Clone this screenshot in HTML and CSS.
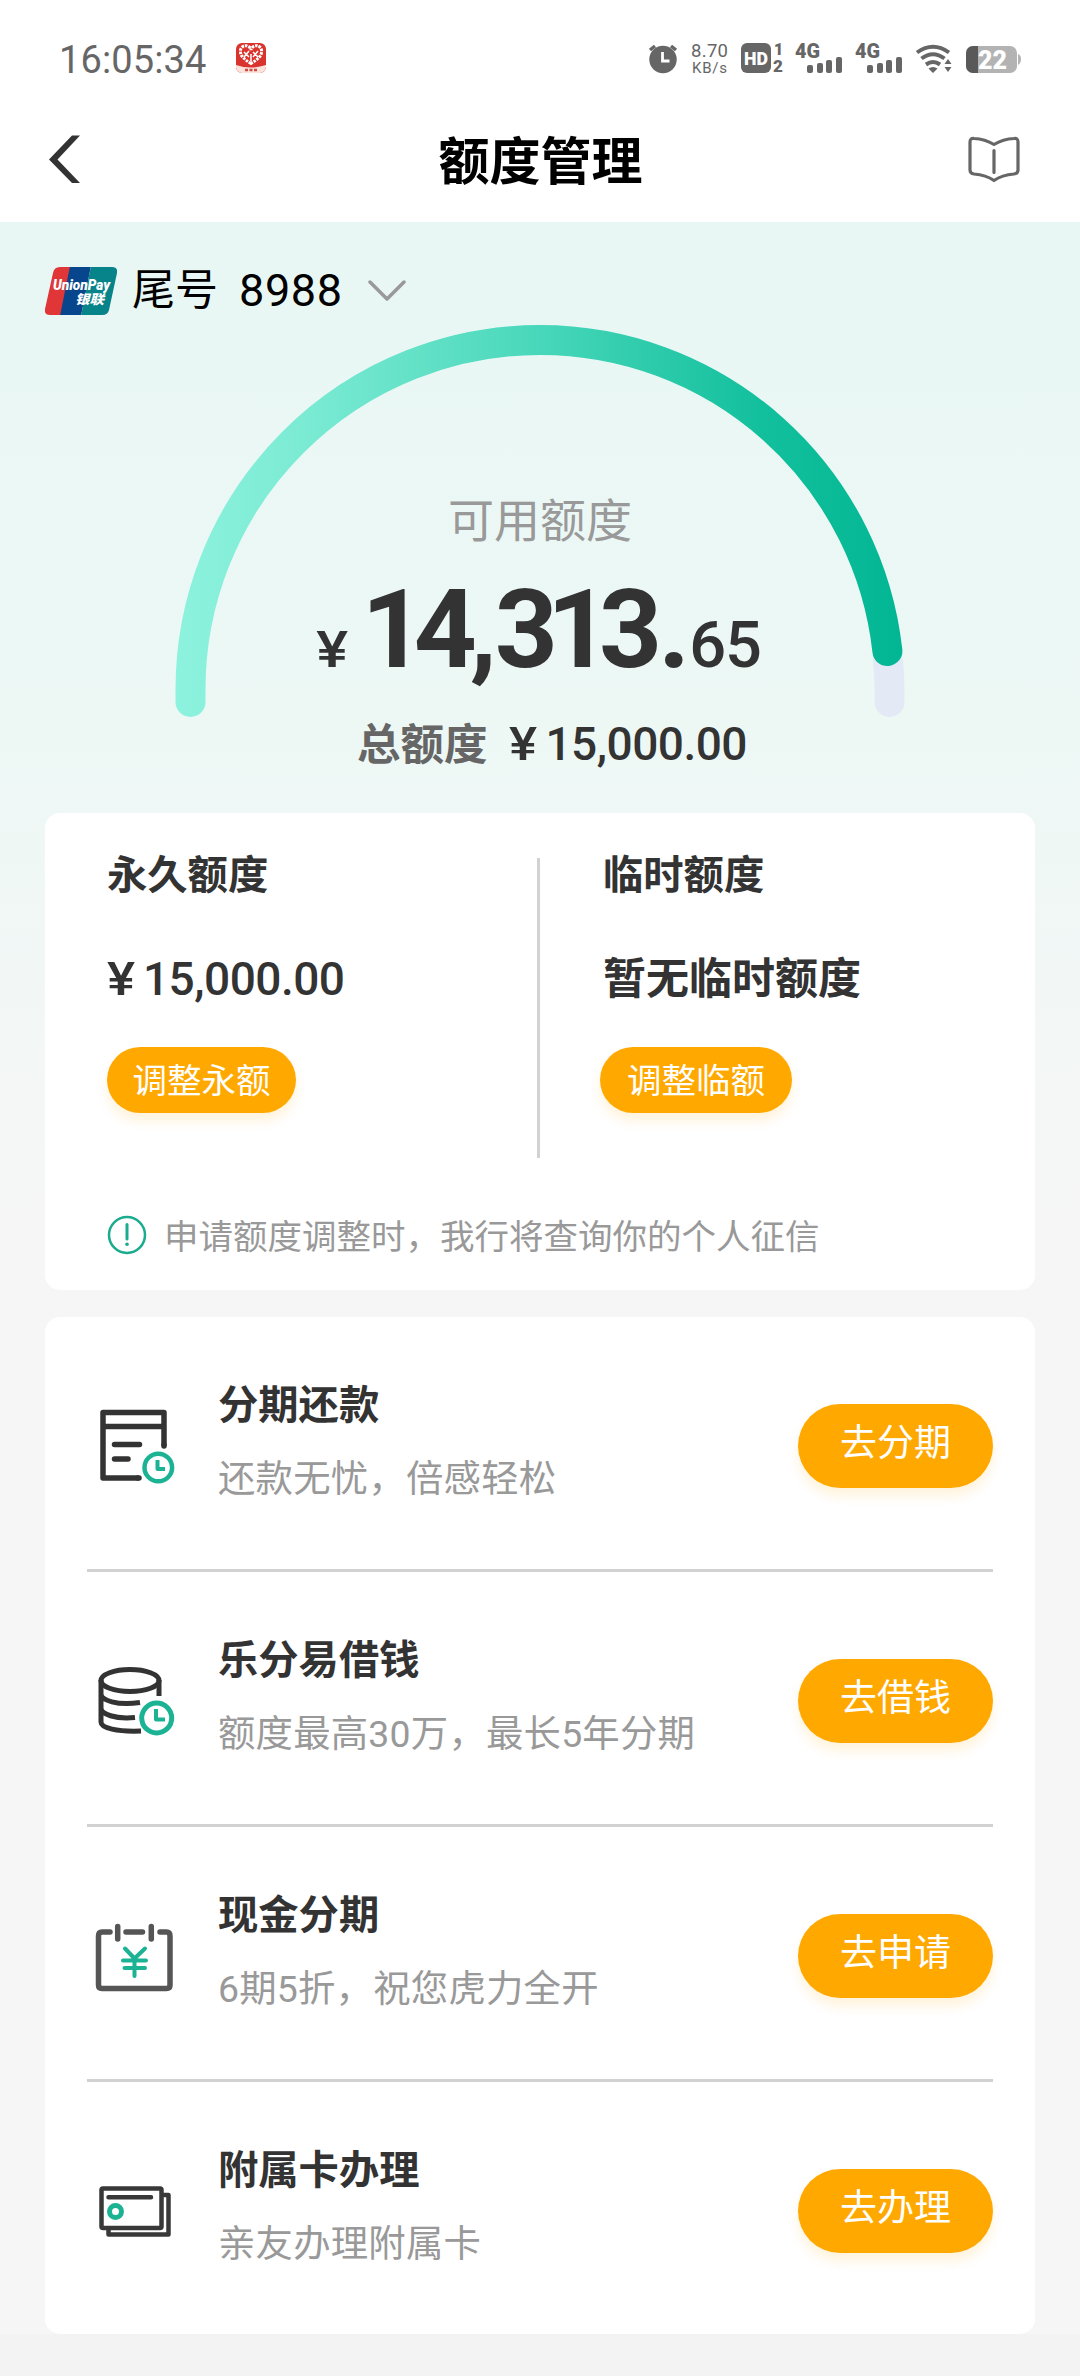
FILE: index.html
```html
<!DOCTYPE html>
<html lang="zh-CN">
<head>
<meta charset="utf-8">
<title>额度管理</title>
<link rel="stylesheet" href="styles.css">
</head>
<body>
<header class="top">
  <div class="status">
    <span class="clock">16:05:34</span>
    <svg class="app-icon" width="30" height="30" viewBox="0 0 30 30">
      <rect width="30" height="30" rx="6" fill="#d8332c"/>
      <path d="M0 22Q15 27 30 22V24a6 6 0 0 1-6 6H6a6 6 0 0 1-6-6Z" fill="#fbe3dc"/>
      <path d="M15 20.500C8 16 4.500 13 4.500 9A5 5 0 0 1 15 7a5 5 0 0 1 10.500 2C25.500 13 22 16 15 20.500Z" fill="none" stroke="#fff" stroke-width="3" stroke-dasharray="2.500 1"/>
      <path d="M8 9l5 5M13 8l-5 6M17 9l5 5M22 8l-5 6M15 11v7" stroke="#fff" stroke-width="1.500"/>
      <path d="M9 27h12" stroke="#cf4b43" stroke-width="2.500" stroke-dasharray="3 1.500"/>
    </svg>
    <svg class="indicators" width="376" height="36" viewBox="646 40 376 36" fill="#666">
      <circle cx="663" cy="59.500" r="13.700"/>
      <path d="M650 50l5-4M676 50l-5-4" stroke="#666" stroke-width="3.500"/>
      <path d="M662.500 52v9h7" fill="none" stroke="#fff" stroke-width="2.800"/>
      <text x="691" y="57" font-size="18.500" textLength="37">8.70</text>
      <text x="692" y="73" font-size="15" textLength="35">KB/s</text>
      <rect x="741" y="43" width="30" height="30" rx="6"/>
      <text x="744" y="64.500" class="heavy" font-size="18" textLength="24" lengthAdjust="spacingAndGlyphs" fill="#fff">HD</text>
      <text x="774" y="55" class="heavy" font-size="16">1</text>
      <text x="773" y="72" class="heavy" font-size="17">2</text>
      <text x="795" y="58" class="heavy" font-size="20" textLength="25" lengthAdjust="spacingAndGlyphs">4G</text>
      <text x="855" y="58" class="heavy" font-size="20" textLength="25" lengthAdjust="spacingAndGlyphs">4G</text>
      <g id="bars"><rect x="807" y="65" width="6" height="8" rx="2"/><rect x="817" y="63" width="6" height="10" rx="2"/><rect x="826" y="60" width="6" height="13" rx="2"/><rect x="836" y="57" width="6" height="16" rx="2"/></g>
      <use href="#bars" x="60"/>
      <g fill="none" stroke="#666" stroke-width="4"><path d="M917 52.500Q933 41 949 52.500M921.500 58.500Q933 50 944.500 58.500M926 64.500Q933 59.500 940 64.500"/></g>
      <path d="M928.500 68.500Q933 65.500 937.500 68.500L933 73ZM944.500 64l3.500-5 3.500 5ZM944.500 67l3.500 5 3.500-5Z"/>
      <rect x="966" y="46" width="51" height="27" rx="7" fill="#b3b3b3"/>
      <path d="M1018 54q3 1 3 5t-3 6Z" fill="#b3b3b3"/>
      <path d="M978 46h-5a7 7 0 0 0-7 7v13a7 7 0 0 0 7 7h5Z" fill="#595959"/>
      <text x="978" y="69" class="heavy" font-size="25" textLength="29" fill="#fff">22</text>
    </svg>
  </div>
  <nav class="nav">
    <svg width="34" height="52" viewBox="0 0 34 52"><path d="M32 2.500H24L1 26.500 24 50H32L9.500 26.500Z" fill="#333"/></svg>
    <h1>额度管理</h1>
    <svg width="52" height="48" viewBox="0 0 52 48" fill="none" stroke="#666" stroke-width="3.200" stroke-linejoin="round" stroke-linecap="round"><path d="M26 9.500Q17 4 6 3.500Q2 3 2 7V35Q2 38.500 6 39Q18 40 26 45.500Q34 40 46 39Q50 38.500 50 35V7Q50 3 46 3.500Q35 4 26 9.500ZM26 15.500V37.500"/></svg>
  </nav>
</header>
<main>
  <section class="card-select">
    <svg class="unionpay" width="72" height="50" viewBox="0 0 72 50">
      <defs><clipPath id="card"><path d="M15 1H67Q73 1 72 7L64 44Q63 49 57 49H5Q-1 49 0 43L8 7Q9 1 15 1Z"/></clipPath></defs>
      <g clip-path="url(#card)"><path d="M0 0H27L17 50H0Z" fill="#e03638"/><path d="M25 0H46L36 50H15Z" fill="#07468c"/><path d="M46 0H72V50H36Z" fill="#07838a"/></g>
      <text class="up-en" x="8" y="23.500" textLength="57" lengthAdjust="spacingAndGlyphs">UnionPay</text>
      <text class="up-cn" x="30" y="37.500" textLength="29" lengthAdjust="spacingAndGlyphs">银联</text>
    </svg>
    <span class="tail">尾号</span><span class="tail-no">8988</span>
    <svg class="chevron" width="38" height="24" viewBox="0 0 38 24"><path d="M2 3L19 20 36 3" fill="none" stroke="#999" stroke-width="3.500" stroke-linejoin="round" stroke-linecap="round"/></svg>
  </section>
  <section class="gauge">
    <svg class="arc" width="730" height="394" viewBox="175 325 730 394" fill="none" stroke-width="30" stroke-linecap="round">
      <defs><linearGradient id="green" gradientUnits="userSpaceOnUse" x1="176" y1="0" x2="904" y2="0"><stop offset="0" stop-color="#8df2de"/><stop offset=".17" stop-color="#7cebd4"/><stop offset=".5" stop-color="#48d7ba"/><stop offset=".8" stop-color="#13c09d"/><stop offset="1" stop-color="#02b693"/></linearGradient></defs>
      <path d="M888 661Q889.500 675 889.500 689V702" stroke="#e4e9f6"/>
      <path d="M190.500 702V689.500A349.500 349.500 0 0 1 540 340A349.500 349.500 0 0 1 887.400 651" stroke="url(#green)"/>
    </svg>
    <div class="figures">
      <div class="avail-label">可用额度</div>
      <div class="avail"><span class="yen">¥</span><span class="int">1<span class="roomy">4</span><span class="comma">,</span>31<span class="loose">3</span>.</span><span class="dec">65</span></div>
      <div class="total"><span class="total-label">总额度</span><span class="money"><span class="yen-s">¥</span>15,000.00</span></div>
    </div>
  </section>
  <section class="panel limits">
    <div class="columns">
      <div class="limit"><h2>永久额度</h2><p class="money"><span class="yen-s">¥</span>15,000.00</p><button class="pill small">调整永额</button></div>
      <div class="limit second"><h2>临时额度</h2><p class="none">暂无临时额度</p><button class="pill small wide">调整临额</button></div>
    </div>
    <div class="notice">
      <svg width="40" height="40" viewBox="0 0 40 40" fill="none" stroke="#1bab8e" stroke-width="2.500"><circle cx="20" cy="20" r="18"/><path d="M20 9.500V24" stroke-width="3" stroke-linecap="round"/><circle cx="20" cy="29.300" r="1.800" fill="#1bab8e" stroke="none"/></svg>
      <span>申请额度调整时，我行将查询你的个人征信</span>
    </div>
  </section>
  <section class="panel services">
    <article class="service">
      <svg width="100" height="100" viewBox="0 -2 100 100" fill="none" stroke="#333" stroke-width="5.500" stroke-linejoin="round"><path d="M79 51V17.500H18V83H54M18 31.500H79"/><path d="M79 51V50M53 83H54M29.500 49.500H54.500M29.500 64H43" stroke-linecap="round"/><g stroke="#1bb394"><circle cx="73.300" cy="72.500" r="13.800" stroke-width="4.500"/><path d="M72.500 65V74H80" stroke-width="4"/></g></svg>
      <div class="copy"><h3>分期还款</h3><p>还款无忧，倍感轻松</p></div><button class="pill">去分期</button>
    </article>
    <article class="service">
      <svg width="100" height="100" viewBox="0 -2 100 100" fill="none" stroke="#333" stroke-width="5" stroke-linejoin="round"><ellipse cx="45" cy="30.500" rx="29" ry="11"/><path d="M74 30V46M16 30V72C16 78 32 82 56 81M16 44C16 50 32 56 55 52.500M16 58C16 64 30 69.500 50 67.500"/><g stroke="#1bb394"><circle cx="71.700" cy="68" r="15" stroke-width="5"/><path d="M71 59V69.500H80" stroke-width="4"/></g></svg>
      <div class="copy"><h3>乐分易借钱</h3><p>额度最高30万，最长5年分期</p></div><button class="pill">去借钱</button>
    </article>
    <article class="service">
      <svg width="100" height="100" viewBox="0 -2 100 100" fill="none" stroke="#555" stroke-width="5.500" stroke-linejoin="round" stroke-linecap="round"><path d="M25 27H17Q13.500 27 13.500 31V80Q13.500 83.500 17 83.500H81.500Q85 83.500 85 80V31Q85 27 81.500 27H75M41 27H57.500M32.700 21.500V34M66.300 21.500V34"/><path d="M40 43.500L49.500 53.500 60 43.500M38 55.500H61M39.500 63H60M49.500 54V71" stroke="#1bb394" stroke-width="4"/></svg>
      <div class="copy"><h3>现金分期</h3><p>6期5折，祝您虎力全开</p></div><button class="pill">去申请</button>
    </article>
    <article class="service">
      <svg width="100" height="100" viewBox="0 -2 100 100" fill="none" stroke="#383838" stroke-width="4.500" stroke-linejoin="round" stroke-linecap="round"><rect x="16.500" y="28.500" width="60" height="39.500" rx="1.500"/><path d="M78 35H83.500V74.500H23.500V69M23.500 37.300H66"/><circle cx="30.500" cy="51.500" r="6" stroke="#1bb394" stroke-width="5"/></svg>
      <div class="copy"><h3>附属卡办理</h3><p>亲友办理附属卡</p></div><button class="pill">去办理</button>
    </article>
  </section>
</main>
</body>
</html>
```

FILE: styles.css
```css
* { box-sizing: border-box; }
body {
  margin: 0;
  width: 1080px;
  height: 2376px;
  background: #f3f3f3;
  color: #333;
  font-family: Roboto, "Noto Sans CJK SC", sans-serif;
}
h1, h2, h3, p { margin: 0; }
svg { display: block; flex: none; }
.top { height: 222px; background: #fff; padding-top: 40px; }
.status { display: flex; height: 36px; padding-left: 59px; }
.clock { width: 177px; color: #666; font-size: 38px; line-height: 40px; letter-spacing: .1px; }
.app-icon { margin-top: 3px; }
.indicators { margin-left: 380px; font-family: Roboto, sans-serif; }
.heavy { font-weight: 900; }
.nav { display: flex; align-items: center; justify-content: space-between; height: 104px; margin-top: 31px; padding: 0 60px 0 48px; }
h1 { color: #000; font-size: 51px; font-weight: 700; line-height: 76px; padding: 7px 0 0 31px; }
main { height: 2112px; padding: 0 45px; background: linear-gradient(#e8f7f4 0, #edf8f5 500px, #f6f6f6 1000px, #f6f6f6 100%); }
.card-select { display: flex; align-items: center; height: 103px; padding-top: 34px; color: #000; }
.tail { margin-left: 15px; font-size: 43px; line-height: 58px; padding-bottom: 2px; }
.tail-no { margin-left: 21px; font-size: 45px; line-height: 60px; letter-spacing: .6px; }
.chevron { margin-left: 25px; }
.up-en { fill: #fff; font: italic 900 14px Roboto, sans-serif; }
.up-cn { fill: #fff; font: italic 900 13px "Noto Sans CJK SC", sans-serif; }
.gauge { display: grid; justify-items: center; height: 488px; }
.arc, .figures { grid-area: 1 / 1; }
.figures { width: 100%; padding-top: 162px; text-align: center; }
.avail-label { color: #999; font-size: 46px; line-height: 68px; }
.avail { display: flex; justify-content: center; align-items: baseline; height: 120px; margin-top: 15px; font-weight: 700; }
.yen { font-size: 50px; font-weight: 500; transform: scaleX(1.2); }
.int { font-size: 110px; line-height: 120px; margin-left: 16px; letter-spacing: -11px; }
.roomy { letter-spacing: -7px; }
.comma { letter-spacing: -2px; }
.loose { letter-spacing: -4px; }
.dec { margin-left: 10px; font-size: 65px; font-weight: 500; letter-spacing: -1px; }
.total { display: flex; justify-content: center; align-items: baseline; height: 60px; margin-top: 24px; padding-left: 24px; gap: 22px; }
.total-label { color: #666; font-size: 43.500px; line-height: 60px; font-weight: 700; }
.money { font-size: 46px; font-weight: 500; line-height: 60px; letter-spacing: -.5px; }
.yen-s { display: inline-block; margin-right: 12px; transform: scaleX(1.15); transform-origin: left; }
.panel { background: #fff; border-radius: 15px; }
.limits { height: 477px; padding: 30px 62px 0; }
.columns { display: flex; height: 330px; }
.limit { width: 433px; height: 300px; border-right: 3px solid #d2d2d2; margin-top: 15px; }
.limit.second { padding-left: 63px; border: 0; }
h2, h3 { font-size: 40.300px; font-weight: 700; line-height: 60px; }
h2 { margin-top: -12px; }
.limit p { margin-top: 41px; height: 64px; line-height: 64px; }
.none { font-size: 43px; font-weight: 700; }
.pill {
  display: block; width: 195px; height: 84px; margin-top: 5px; padding: 0 0 11px;
  border: 0; border-radius: 42px; background: #ffa800; color: #fff;
  font: 37px "Noto Sans CJK SC", sans-serif; box-shadow: 0 8px 12px rgba(255, 168, 0, .14);
}
.pill.small { width: 189px; height: 66px; margin-top: 36px; padding: 0 0 4px; font-size: 34.500px; }
.pill.wide { width: 192px; margin-left: -3px; }
.notice { display: flex; align-items: center; height: 60px; margin-top: 32px; gap: 17px; color: #999; font-size: 34.500px; }
.notice span { padding-bottom: 2px; }
.services { height: 1017px; margin-top: 27px; padding: 0 42px; }
.service { display: flex; align-items: center; height: 255px; border-bottom: 3px solid #d2d2d2; }
.service:last-child { border-color: transparent; }
.service > svg { margin-left: -2px; }
.copy { flex: 1; margin-left: 33px; padding-bottom: 3px; }
.copy p { margin-top: 15px; color: #999; font-size: 37.400px; line-height: 56px; letter-spacing: .2px; white-space: nowrap; }
```
